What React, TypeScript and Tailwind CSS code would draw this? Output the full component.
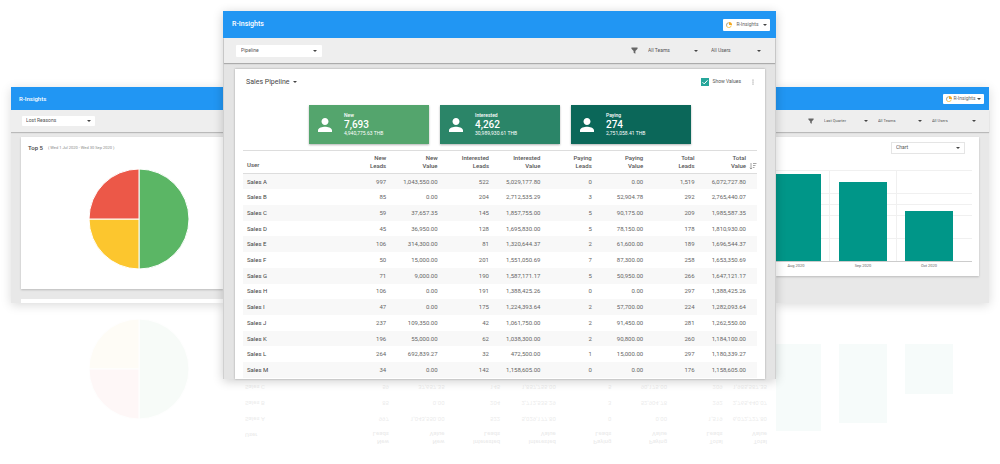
import React from "react";

type Row = [string, string, string, string, string, string, string, string, string];

const rows: Row[] = [
  ["Sales A", "997", "1,043,550.00", "522", "5,029,177.80", "0", "0.00", "1,519", "6,072,727.80"],
  ["Sales B", "85", "0.00", "204", "2,712,535.29", "3", "52,904.78", "292", "2,765,440.07"],
  ["Sales C", "59", "37,657.35", "145", "1,857,755.00", "5", "90,175.00", "209", "1,985,587.35"],
  ["Sales D", "45", "36,950.00", "128", "1,695,830.00", "5", "78,150.00", "178", "1,810,930.00"],
  ["Sales E", "106", "314,300.00", "81", "1,320,644.37", "2", "61,600.00", "189", "1,696,544.37"],
  ["Sales F", "50", "15,000.00", "201", "1,551,050.69", "7", "87,300.00", "258", "1,653,350.69"],
  ["Sales G", "71", "9,000.00", "190", "1,587,171.17", "5", "50,950.00", "266", "1,647,121.17"],
  ["Sales H", "106", "0.00", "191", "1,388,425.26", "0", "0.00", "297", "1,388,425.26"],
  ["Sales I", "47", "0.00", "175", "1,224,393.64", "2", "57,700.00", "224", "1,282,093.64"],
  ["Sales J", "237", "109,350.00", "42", "1,061,750.00", "2", "91,450.00", "281", "1,262,550.00"],
  ["Sales K", "196", "55,000.00", "62", "1,038,300.00", "2", "90,800.00", "260", "1,184,100.00"],
  ["Sales L", "264", "692,839.27", "32", "472,500.00", "1", "15,000.00", "297", "1,180,339.27"],
  ["Sales M", "34", "0.00", "142", "1,158,605.00", "0", "0.00", "176", "1,158,605.00"],
];

const columns = [
  ["New", "Leads"],
  ["New", "Value"],
  ["Interested", "Leads"],
  ["Interested", "Value"],
  ["Paying", "Leads"],
  ["Paying", "Value"],
  ["Total", "Leads"],
  ["Total", "Value"],
];

const stats = [
  { label: "New", count: "7,693", value: "4,940,775.63 THB", bg: "bg-[#54a56d]" },
  { label: "Interested", count: "4,262", value: "30,989,930.61 THB", bg: "bg-[#2b8568]" },
  { label: "Paying", count: "274", value: "2,751,058.41 THB", bg: "bg-[#0b6759]" },
];

function Caret() {
  return (
    <svg viewBox="0 0 4 2" className="pointer-events-none h-0.5 w-1 shrink-0 text-[#444]">
      <path d="M0 0h4L2 2z" fill="currentColor" />
    </svg>
  );
}

function FilterIcon({ className }: { className: string }) {
  return (
    <svg viewBox="0 0 16 16" className={`shrink-0 text-[#666] ${className}`}>
      <path d="M1 1h14v3L10 9v6.5L6 13V9L1 4z" fill="currentColor" />
    </svg>
  );
}

function PersonIcon() {
  return (
    <svg viewBox="4 4 16 16" className="size-[14px] shrink-0">
      <path
        fill="#fff"
        d="M12 12c2.2 0 4-1.8 4-4s-1.8-4-4-4-4 1.800-4 4 1.800 4 4 4zm0 2c-2.700 0-8 1.300-8 4v2h16v-2c0-2.700-5.300-4-8-4z"
      />
    </svg>
  );
}

function SortIcon() {
  return (
    <svg viewBox="0 0 16 16" className="size-2 shrink-0" fill="none" stroke="#888" strokeWidth="1.5">
      <path d="M4 2v12M1.500 11.500L4 14l2.500-2.500M8 3h7M8 7h5M8 11h3" />
    </svg>
  );
}

interface PickerProps {
  label: string;
  value: string;
  className: string;
}

function Picker({ label, value, className }: PickerProps) {
  return (
    <label className={`flex items-center ${className}`}>
      <select
        aria-label={label}
        className="min-w-0 flex-1 cursor-pointer appearance-none bg-transparent text-[#555] outline-none"
      >
        <option>{value}</option>
      </select>
      <Caret />
    </label>
  );
}

function AppButton({ className }: { className: string }) {
  return (
    <button type="button" className={`flex items-center rounded-[1px] bg-white text-[#666] ${className}`}>
      <svg viewBox="0 0 16 16" className="size-[6px] shrink-0">
        <path d="M7 2a6.500 6.500 0 1 0 7 7" fill="none" stroke="#f5b82e" strokeWidth="2" />
        <path d="M7 2a6.500 6.500 0 0 0-5 9" fill="none" stroke="#8fa3c8" strokeWidth="2" />
        <path d="M8 8V0a8 8 0 0 1 8 8z" fill="#f5a81e" />
      </svg>
      <span className="flex-1 text-center">R-Insights</span>
      <Caret />
    </button>
  );
}

function HeadCells() {
  return (
    <tr className="h-[23px]">
      <th className="w-1/5 pl-1 text-left align-bottom font-medium">
        <span className="block pb-1">User</span>
      </th>
      {columns.map(([top, bottom], i) => {
        const last = i === columns.length - 1;
        return (
          <th
            key={top + bottom}
            className={`w-1/10 text-right align-middle font-medium ${last ? "pr-0" : "pr-[11px]"}`}
          >
            <span className={`block ${last ? "pr-[11px]" : ""}`}>{top}</span>
            <span className="flex items-center justify-end gap-[3px]">
              {bottom}
              {last && <SortIcon />}
            </span>
          </th>
        );
      })}
    </tr>
  );
}

function PieChart({ className }: { className: string }) {
  return (
    <svg viewBox="0 0 100 100" className={className}>
      <g stroke="#fff" strokeWidth="1">
        <path d="M50 50V0a50 50 0 0 1 0 100z" fill="#5bb665" />
        <path d="M50 50v50A50 50 0 0 1 0 50z" fill="#fcc62e" />
        <path d="M50 50H0A50 50 0 0 1 50 0z" fill="#ec5848" />
      </g>
    </svg>
  );
}

function LostReasons() {
  return (
    <section className="mt-[76px] min-w-0">
      <div className="flex h-[216px] flex-col overflow-hidden bg-[#e8e8e8] shadow-[0_2px_10px_rgba(0,0,0,0.15)]">
        <header className="flex h-[23px] shrink-0 items-center bg-[#2196f3] pl-2">
          <h2 className="text-[6px] font-medium text-white">R-Insights</h2>
        </header>
        <div className="flex h-[22px] shrink-0 items-center bg-[#eee] pl-[11px] shadow-[0_1px_1px_rgba(0,0,0,0.2)]">
          <Picker label="Report" value="Lost Reasons" className="h-[10px] w-[73px] rounded-[1px] bg-white px-1 text-[5px]" />
        </div>
        <div className="mt-[5px] ml-[10px] h-[152px] shrink-0 bg-white shadow-[0_1px_2px_rgba(0,0,0,0.2)]">
          <div className="flex h-[21px] items-center gap-[5px] pl-[7px]">
            <h3 className="text-[6px] font-medium text-[#444]">Top 5</h3>
            <span className="text-[4px] leading-[6px] text-[#888]">( Wed 1 Jul 2020 - Wed 30 Sep 2020 )</span>
          </div>
          <PieChart className="mt-[11px] ml-[68px] size-[100px]" />
        </div>
        <div className="mt-[10px] ml-[10px] flex-1 bg-white" />
      </div>
      <PieChart className="mt-4 ml-[78px] size-[100px] -scale-y-100 opacity-4" />
    </section>
  );
}

function Pipeline() {
  return (
    <section className="relative z-10 min-w-0">
      <div className="border-x border-[#d0d0d0] bg-[#e4e4e4] shadow-[0_2px_10px_rgba(0,0,0,0.2)]">
        <header className="-mx-px flex h-[27px] items-center justify-between bg-[#2196f3] pr-[6px] pl-[9px]">
          <h1 className="text-[7px] font-medium text-white">R-Insights</h1>
          <AppButton className="h-[12px] w-[47px] px-[3px] text-[5px]" />
        </header>
        <div className="flex h-[25px] items-center bg-[#eee] pr-[14px] pl-3 text-[5px] shadow-[0_1px_1px_rgba(0,0,0,0.25)]">
          <Picker label="Report" value="Pipeline" className="h-[12px] w-[86px] rounded-[1px] bg-white px-[5px]" />
          <FilterIcon className="mr-[10px] ml-auto size-[7px]" />
          <Picker label="Team" value="All Teams" className="mr-[13px] w-[50px]" />
          <Picker label="User" value="All Users" className="w-[50px]" />
        </div>
        <div className="mt-[6px] mr-[10px] ml-[11px] bg-white px-2 pb-px shadow-[0_0_2px_rgba(0,0,0,0.3)]">
          <div className="flex h-[26px] items-center pr-[2px] pl-[3px]">
            <button type="button" className="flex items-center gap-1 text-[7px] text-[#444]">
              Sales Pipeline
              <Caret />
            </button>
            <label className="ml-auto flex items-center gap-[3px] text-[5px] text-[#555]">
              <span className="grid">
                <input
                  type="checkbox"
                  defaultChecked
                  className="size-2 appearance-none bg-[#b0bec5] [grid-area:1/1] checked:bg-[#26a69a]"
                />
                <svg viewBox="0 0 8 8" className="pointer-events-none size-2 [grid-area:1/1]">
                  <path d="M1.500 4.200l1.700 1.700 3.300-3.600" fill="none" stroke="#fff" />
                </svg>
              </span>
              Show Values
            </label>
            <button type="button" aria-label="More" className="ml-[10px]">
              <svg viewBox="0 0 4 6" className="h-[6px] w-1" fill="#777">
                <circle cx="2" cy="1" r=".6" />
                <circle cx="2" cy="3" r=".6" />
                <circle cx="2" cy="5" r=".6" />
              </svg>
            </button>
          </div>
          <div className="mt-[10px] mr-[66px] ml-[66px] grid grid-cols-3 gap-[11px]">
            {stats.map((stat) => (
              <div
                key={stat.label}
                className={`flex h-[39px] items-center gap-3 pl-[9px] text-white shadow-[0_1px_2px_rgba(0,0,0,0.3)] ${stat.bg}`}
              >
                <PersonIcon />
                <div className="text-[5px] whitespace-nowrap">
                  <p className="leading-[7px] font-medium">{stat.label}</p>
                  <p className="text-[10px] leading-[11px] font-medium">{stat.count}</p>
                  <p className="leading-[7px]">{stat.value}</p>
                </div>
              </div>
            ))}
          </div>
          <table className="mt-[6px] h-[228px] w-full table-fixed border-collapse border-t border-[#ddd] text-[6px] leading-[8px] text-[#666]">
            <thead className="border-b border-[#ddd] text-[#555]">
              <HeadCells />
            </thead>
            <tbody>
              {rows.map(([user, ...cells]) => (
                <tr key={user} className="h-[15px] odd:bg-[#f8f8f8]">
                  <td className="pl-1 text-[#444]">{user}</td>
                  {cells.map((cell, i) => (
                    <td key={i} className="pr-[11px] text-right">
                      {cell}
                    </td>
                  ))}
                </tr>
              ))}
            </tbody>
          </table>
        </div>
      </div>
      {/* floor reflection of the top of the table */}
      <div aria-hidden="true" className="mr-[9px] ml-[18px] -scale-y-100 opacity-15">
        <table className="w-full table-fixed border-collapse text-[6px] leading-[8px] text-[#777]">
          <thead>
            <tr className="h-[22px]">
              <th className="w-[21%] pl-1 text-left align-bottom font-medium">
                <span className="block pb-1">User</span>
              </th>
              {columns.map(([top, bottom]) => (
                <th key={top + bottom} className="w-[10.6%] pr-[18px] font-medium last:w-[5%] last:pr-0">
                  <span className="flex flex-col items-end">
                    <span>{top}</span>
                    <span>{bottom}</span>
                  </span>
                </th>
              ))}
            </tr>
          </thead>
          <tbody>
            {rows.slice(0, 3).map(([user, ...cells]) => (
              <tr key={user} className="h-[16px]">
                <td className="pl-1">{user}</td>
                {cells.map((cell, i) => (
                  <td key={i} className="pr-[18px] last:pr-0">
                    <span className="flex justify-end">{cell}</span>
                  </td>
                ))}
              </tr>
            ))}
          </tbody>
        </table>
      </div>
    </section>
  );
}

const bars = [
  { label: "Aug 2020", x: 0, width: 45, height: 87, labelX: 20 },
  { label: "Sep 2020", x: 63, width: 48, height: 79, labelX: 87 },
  { label: "Oct 2020", x: 129, width: 48, height: 50, labelX: 153 },
];

function BarChart() {
  return (
    <svg viewBox="0 0 203 110" className="w-full">
      <g stroke="#f0f0f0" strokeWidth="1">
        <path d="M0 6.500h196M0 29.500h196M0 40.500h196M0 51.500h196M0 74.500h196M53.500 6v91M120.500 6v91" />
        <path d="M0 97.500h196" stroke="#ccc" />
      </g>
      {bars.map((bar) => (
        <g key={bar.label}>
          <rect x={bar.x} y={97 - bar.height} width={bar.width} height={bar.height} fill="#009688" />
          <text x={bar.labelX} y="103" textAnchor="middle" fontSize="4" fill="#666">
            {bar.label}
          </text>
        </g>
      ))}
    </svg>
  );
}

function Trend() {
  return (
    <section className="mt-[76px] min-w-0">
      <div className="h-[216px] bg-[#e8e8e8] shadow-[0_2px_10px_rgba(0,0,0,0.15)]">
        <header className="flex h-[23px] items-center justify-end bg-[#2196f3] pr-[5px]">
          <AppButton className="h-[10px] w-[41px] px-[3px] text-[5px]" />
        </header>
        <div className="flex h-[22px] items-center justify-end gap-[10px] bg-[#eee] pr-[13px] text-[4px] shadow-[0_1px_1px_rgba(0,0,0,0.2)]">
          <FilterIcon className="size-[6px]" />
          <Picker label="Period" value="Last Quarter" className="w-11" />
          <Picker label="Team" value="All Teams" className="w-11" />
          <Picker label="User" value="All Users" className="w-11" />
        </div>
        <div className="mt-[5px] mr-[10px] h-[139px] bg-white shadow-[0_1px_2px_rgba(0,0,0,0.2)]">
          <div className="flex justify-end pt-[5px] pr-[14px]">
            <Picker label="View" value="Chart" className="h-3 w-[74px] border border-[#e5e5e5] px-1 text-[5px]" />
          </div>
          <div className="mt-[10px]">
            <BarChart />
          </div>
        </div>
      </div>
      <svg viewBox="0 0 203 90" className="mt-[41px] mr-[10px] h-[90px] opacity-3">
        {bars.map((bar) => (
          <rect key={bar.label} x={bar.x} y="0" width={bar.width} height={bar.height} fill="#009688" />
        ))}
      </svg>
    </section>
  );
}

export default function App() {
  return (
    <main className="grid grid-cols-[212fr_553fr_213fr] items-start overflow-hidden bg-white px-[11px] pt-[11px] pb-3 font-['Roboto',sans-serif]">
      <LostReasons />
      <Pipeline />
      <Trend />
    </main>
  );
}
